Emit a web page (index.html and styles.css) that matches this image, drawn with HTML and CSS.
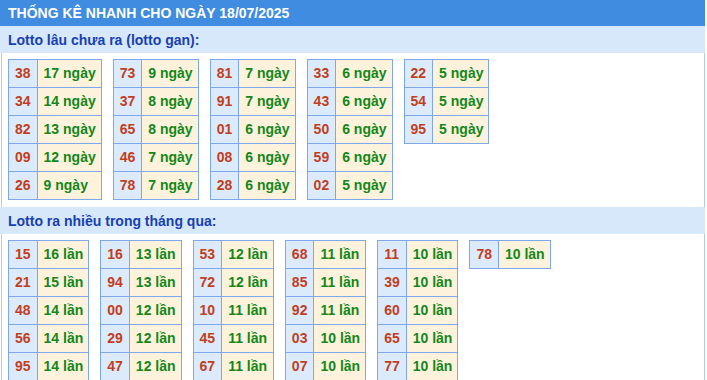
FILE: index.html
```html
<!DOCTYPE html>
<html lang="vi">
<head>
<meta charset="utf-8">
<link rel="stylesheet" href="styles.css">
</head>
<body>
<div class="box">
  <div class="title">THỐNG KÊ NHANH CHO NGÀY 18/07/2025</div>
  <div class="panel">
    <div class="subhead">Lotto lâu chưa ra (lotto gan):</div>
    <div class="tables">
      <table class="t"><tr><td class="n">38</td><td class="v">17 ngày</td></tr><tr><td class="n">34</td><td class="v">14 ngày</td></tr><tr><td class="n">82</td><td class="v">13 ngày</td></tr><tr><td class="n">09</td><td class="v">12 ngày</td></tr><tr><td class="n">26</td><td class="v">9 ngày</td></tr></table>
      <table class="t"><tr><td class="n">73</td><td class="v">9 ngày</td></tr><tr><td class="n">37</td><td class="v">8 ngày</td></tr><tr><td class="n">65</td><td class="v">8 ngày</td></tr><tr><td class="n">46</td><td class="v">7 ngày</td></tr><tr><td class="n">78</td><td class="v">7 ngày</td></tr></table>
      <table class="t"><tr><td class="n">81</td><td class="v">7 ngày</td></tr><tr><td class="n">91</td><td class="v">7 ngày</td></tr><tr><td class="n">01</td><td class="v">6 ngày</td></tr><tr><td class="n">08</td><td class="v">6 ngày</td></tr><tr><td class="n">28</td><td class="v">6 ngày</td></tr></table>
      <table class="t"><tr><td class="n">33</td><td class="v">6 ngày</td></tr><tr><td class="n">43</td><td class="v">6 ngày</td></tr><tr><td class="n">50</td><td class="v">6 ngày</td></tr><tr><td class="n">59</td><td class="v">6 ngày</td></tr><tr><td class="n">02</td><td class="v">5 ngày</td></tr></table>
      <table class="t"><tr><td class="n">22</td><td class="v">5 ngày</td></tr><tr><td class="n">54</td><td class="v">5 ngày</td></tr><tr><td class="n">95</td><td class="v">5 ngày</td></tr></table>
    </div>
    <div class="subhead">Lotto ra nhiều trong tháng qua:</div>
    <div class="tables">
      <table class="t"><tr><td class="n">15</td><td class="v">16 lần</td></tr><tr><td class="n">21</td><td class="v">15 lần</td></tr><tr><td class="n">48</td><td class="v">14 lần</td></tr><tr><td class="n">56</td><td class="v">14 lần</td></tr><tr><td class="n">95</td><td class="v">14 lần</td></tr></table>
      <table class="t"><tr><td class="n">16</td><td class="v">13 lần</td></tr><tr><td class="n">94</td><td class="v">13 lần</td></tr><tr><td class="n">00</td><td class="v">12 lần</td></tr><tr><td class="n">29</td><td class="v">12 lần</td></tr><tr><td class="n">47</td><td class="v">12 lần</td></tr></table>
      <table class="t"><tr><td class="n">53</td><td class="v">12 lần</td></tr><tr><td class="n">72</td><td class="v">12 lần</td></tr><tr><td class="n">10</td><td class="v">11 lần</td></tr><tr><td class="n">45</td><td class="v">11 lần</td></tr><tr><td class="n">67</td><td class="v">11 lần</td></tr></table>
      <table class="t"><tr><td class="n">68</td><td class="v">11 lần</td></tr><tr><td class="n">85</td><td class="v">11 lần</td></tr><tr><td class="n">92</td><td class="v">11 lần</td></tr><tr><td class="n">03</td><td class="v">10 lần</td></tr><tr><td class="n">07</td><td class="v">10 lần</td></tr></table>
      <table class="t"><tr><td class="n">11</td><td class="v">10 lần</td></tr><tr><td class="n">39</td><td class="v">10 lần</td></tr><tr><td class="n">60</td><td class="v">10 lần</td></tr><tr><td class="n">65</td><td class="v">10 lần</td></tr><tr><td class="n">77</td><td class="v">10 lần</td></tr></table>
      <table class="t"><tr><td class="n">78</td><td class="v">10 lần</td></tr></table>
    </div>
  </div>
</div>
</body>
</html>
```
FILE: styles.css
```css
html, body {
  margin: 0;
  padding: 0;
  background: #ffffff;
}
body {
  font-family: "Liberation Sans", Arial, sans-serif;
  font-size: 14px;
  font-weight: 700;
}
.box {
  width: 705px;
}
.title {
  height: 26px;
  line-height: 26px;
  padding-left: 8px;
  background: #3f8ce0;
  color: #ffffff;
  font-size: 14px;
  font-weight: 700;
}
.panel {
  margin-left: 1px;
  border-left: 1px solid #b3c9ea;
  border-right: 1px solid #b3c9ea;
}
.subhead {
  height: 27px;
  line-height: 26px;
  padding-top: 1px;
  box-sizing: border-box;
  margin-left: -2px;
  padding-left: 8px;
  margin-right: -1px;
  background: #d7e8fb;
  color: #1740b4;
  font-weight: 700;
}
.tables {
  display: flex;
  align-items: flex-start;
  gap: 11px;
  padding: 6px 6px 7px 6px;
}
.t {
  border-collapse: collapse;
  font-size: 14px;
  font-weight: 700;
}
.t td {
  border: 1px solid #7ea7ec;
  padding: 5px 5px;
  line-height: 17px;
  white-space: nowrap;
  font-weight: 700;
}
.t .n {
  background: #dcebfc;
  color: #c23e1c;
  padding-left: 6px;
  padding-right: 6px;
}
.t .v {
  background: #fdf3dc;
  color: #14871a;
  padding-left: 6px;
  padding-right: 5px;
}
```
